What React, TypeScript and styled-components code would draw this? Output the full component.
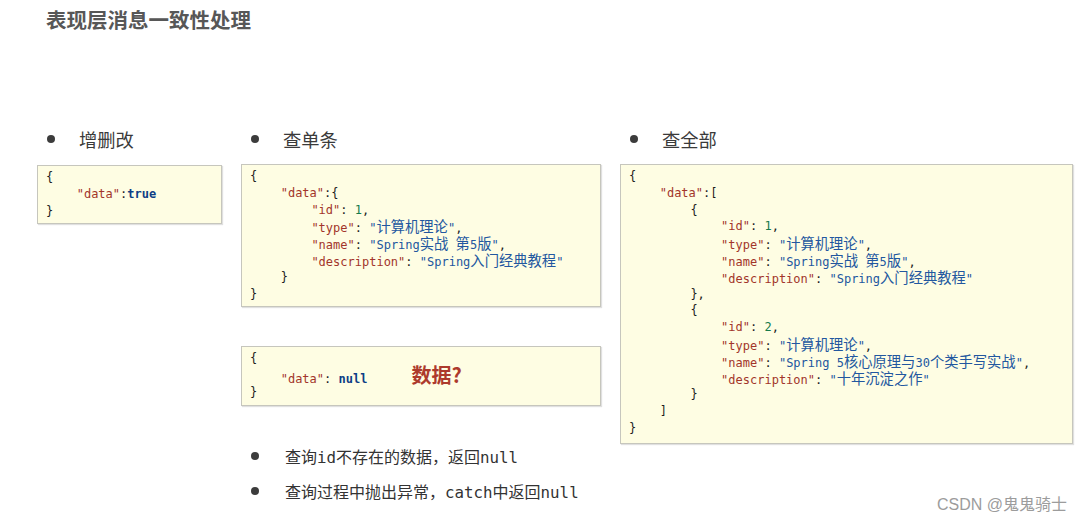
import React from "react";
import styled, { createGlobalStyle } from "styled-components";

const Global = createGlobalStyle`
  html, body { margin: 0; padding: 0; background: #ffffff; }
  body { font-family: "Noto Sans CJK SC", "Noto Sans", sans-serif; }
`;

const Page = styled.div`
  position: relative;
  width: 1084px;
  height: 524px;
  box-sizing: border-box;
  padding-top: 7px;
  overflow: hidden;
  background: #fff;
`;

const Title = styled.h1`
  margin: 0 0 0 46px;
  font-size: 20.5px;
  line-height: 24px;
  font-weight: 700;
  color: #575757;
  font-family: "Noto Sans CJK SC", sans-serif;
`;

const Columns = styled.div`
  display: grid;
  grid-template-columns: 185px 360px 453px;
  column-gap: 19px;
  margin: 96px 0 0 37px;
  align-items: start;
`;

const Column = styled.div`
  display: flex;
  flex-direction: column;
`;

const Heading = styled.div`
  display: flex;
  align-items: center;
  height: 24px;
  padding-left: 10px;
  gap: 24px;
  font-size: 18.3px;
  color: #3a3a3a;
  margin-bottom: 13px;
`;

const Dot = styled.span`
  width: 8px;
  height: 8px;
  border-radius: 50%;
  background: #3c3c3c;
  flex: none;
`;

const CodeBox = styled.div<{ $mt?: number; $pb?: number }>`
  margin-top: ${(p) => p.$mt ?? 0}px;
  background: #fefde3;
  border: 1px solid #c6c6bd;
  box-shadow: 1px 1px 1px rgba(0, 0, 0, 0.12);
  padding: 3px 8px ${(p) => p.$pb ?? 4}px 8px;
  font-family: "DejaVu Sans Mono", "Liberation Mono", monospace;
  font-size: 12px;
  color: #1c1c1c;
`;

const Line = styled.div<{ $indent: number }>`
  height: 16.8px;
  line-height: 16.8px;
  white-space: pre;
  padding-left: ${(p) => p.$indent * 30.7}px;
`;

const Key = styled.span`
  color: #a2352a;
`;
const Str = styled.span`
  color: #22579f;
`;
const Num = styled.span`
  color: #157a4c;
`;
const Kw = styled.span`
  color: #0d3e86;
  font-weight: 700;
`;
const Wide = styled.span`
  display: inline-block;
  height: 16.8px;
  line-height: 16.8px;
  font-family: "Noto Sans CJK SC", sans-serif;
  font-size: 14.3px;
`;

const Ask = styled.span`
  display: inline-block;
  height: 16.8px;
  line-height: 16.8px;
  margin-left: 44px;
  font-family: "Noto Sans CJK SC", sans-serif;
  font-size: 20px;
  font-weight: 700;
  color: #ad3a2c;
`;

const Notes = styled.ul`
  list-style: none;
  margin: 38px 0 0 0;
  padding: 0;
  display: flex;
  flex-direction: column;
  gap: 11px;
`;

const Note = styled.li`
  display: flex;
  align-items: center;
  gap: 26px;
  padding-left: 10px;
  height: 24px;
  font-size: 16px;
  color: #333;
`;

const Mono = styled.span`
  font-family: "DejaVu Sans Mono", "Liberation Mono", monospace;
  font-size: 15.8px;
`;

const Watermark = styled.div`
  position: absolute;
  right: 17px;
  bottom: 9px;
  font-family: "Liberation Sans", "Noto Sans CJK SC", sans-serif;
  font-size: 16px;
  color: #9c9c9c;
`;

type Tok = { t: "key" | "str" | "num" | "kw" | "p"; v: string };
type CodeLine = { i: number; toks: Tok[] };

const CJK = /([\u3000-\u9fff\uff00-\uffef]+)/;

function renderText(v: string) {
  return v.split(CJK).map((part, idx) =>
    CJK.test(part) ? <Wide key={idx}>{part}</Wide> : <React.Fragment key={idx}>{part}</React.Fragment>
  );
}

function Tokens({ toks }: { toks: Tok[] }) {
  return (
    <>
      {toks.map((tk, idx) => {
        const c = renderText(tk.v);
        if (tk.t === "key") return <Key key={idx}>{c}</Key>;
        if (tk.t === "str") return <Str key={idx}>{c}</Str>;
        if (tk.t === "num") return <Num key={idx}>{c}</Num>;
        if (tk.t === "kw") return <Kw key={idx}>{c}</Kw>;
        return <span key={idx}>{c}</span>;
      })}
    </>
  );
}

const p = (v: string): Tok => ({ t: "p", v });
const k = (v: string): Tok => ({ t: "key", v: `"${v}"` });
const s = (v: string): Tok => ({ t: "str", v: `"${v}"` });
const n = (v: string): Tok => ({ t: "num", v });
const kw = (v: string): Tok => ({ t: "kw", v });

const book = (i: number, id: string, type: string, name: string, desc: string, tail: string): CodeLine[] => [
  { i: i, toks: [p("{")] },
  { i: i + 1, toks: [k("id"), p(": "), n(id), p(",")] },
  { i: i + 1, toks: [k("type"), p(": "), s(type), p(",")] },
  { i: i + 1, toks: [k("name"), p(": "), s(name), p(",")] },
  { i: i + 1, toks: [k("description"), p(": "), s(desc)] },
  { i: i, toks: [p("}" + tail)] },
];

const createCode: CodeLine[] = [
  { i: 0, toks: [p("{")] },
  { i: 1, toks: [k("data"), p(":"), kw("true")] },
  { i: 0, toks: [p("}")] },
];

const oneCode: CodeLine[] = [
  { i: 0, toks: [p("{")] },
  { i: 1, toks: [k("data"), p(":{")] },
  ...book(1, "1", "计算机理论", "Spring实战 第5版", "Spring入门经典教程", "").slice(1, 5),
  { i: 1, toks: [p("}")] },
  { i: 0, toks: [p("}")] },
];

const allCode: CodeLine[] = [
  { i: 0, toks: [p("{")] },
  { i: 1, toks: [k("data"), p(":[")] },
  ...book(2, "1", "计算机理论", "Spring实战 第5版", "Spring入门经典教程", ","),
  ...book(2, "2", "计算机理论", "Spring 5核心原理与30个类手写实战", "十年沉淀之作", ""),
  { i: 1, toks: [p("]")] },
  { i: 0, toks: [p("}")] },
];

function Code({ lines, mt, pb }: { lines: CodeLine[]; mt?: number; pb?: number }) {
  return (
    <CodeBox $mt={mt} $pb={pb}>
      {lines.map((ln, idx) => (
        <Line key={idx} $indent={ln.i}>
          <Tokens toks={ln.toks} />
        </Line>
      ))}
    </CodeBox>
  );
}

export default function App() {
  return (
    <>
      <Global />
      <Page>
        <Title>表现层消息一致性处理</Title>
        <Columns>
          <Column>
            <Heading>
              <Dot />
              增删改
            </Heading>
            <Code lines={createCode} mt={1} />
          </Column>
          <Column>
            <Heading>
              <Dot />
              查单条
            </Heading>
            <Code lines={oneCode} />
            <CodeBox $mt={39}>
              <Line $indent={0}>{"{"}</Line>
              <Line $indent={1}>
                <Key>"data"</Key>: <Kw>null</Kw>
                <Ask>数据?</Ask>
              </Line>
              <Line $indent={0}>{"}"}</Line>
            </CodeBox>
            <Notes>
              <Note>
                <Dot />
                <span>
                  查询<Mono>id</Mono>不存在的数据，返回<Mono>null</Mono>
                </span>
              </Note>
              <Note>
                <Dot />
                <span>
                  查询过程中抛出异常，<Mono>catch</Mono>中返回<Mono>null</Mono>
                </span>
              </Note>
            </Notes>
          </Column>
          <Column>
            <Heading>
              <Dot />
              查全部
            </Heading>
            <Code lines={allCode} pb={6} />
          </Column>
        </Columns>
        <Watermark>CSDN @鬼鬼骑士</Watermark>
      </Page>
    </>
  );
}
